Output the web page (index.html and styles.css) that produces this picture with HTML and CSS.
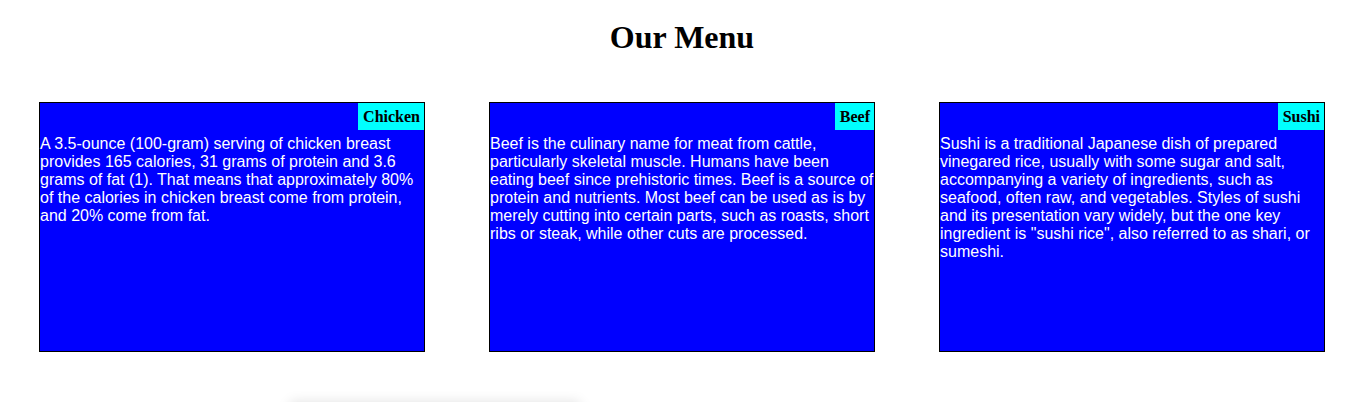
FILE: index.html
```html
<!DOCTYPE html>
<html>
<head>
<meta charset="utf-8">
<link rel="stylesheet" href="styles.css">
</head>
<body>
<h1 class="title">Our Menu</h1>
<div class="menu">
  <div class="card">
    <div class="card-head"><span class="label">Chicken</span></div>
    <p class="desc">A 3.5-ounce (100-gram) serving of chicken breast provides 165 calories, 31 grams of protein and 3.6 grams of fat (1). That means that approximately 80% of the calories in chicken breast come from protein, and 20% come from fat.</p>
  </div>
  <div class="card">
    <div class="card-head"><span class="label">Beef</span></div>
    <p class="desc">Beef is the culinary name for meat from cattle, particularly skeletal muscle. Humans have been eating beef since prehistoric times. Beef is a source of protein and nutrients. Most beef can be used as is by merely cutting into certain parts, such as roasts, short ribs or steak, while other cuts are processed.</p>
  </div>
  <div class="card">
    <div class="card-head"><span class="label">Sushi</span></div>
    <p class="desc">Sushi is a traditional Japanese dish of prepared vinegared rice, usually with some sugar and salt, accompanying a variety of ingredients, such as seafood, often raw, and vegetables. Styles of sushi and its presentation vary widely, but the one key ingredient is "sushi rice", also referred to as shari, or sumeshi.</p>
  </div>
</div>
<div class="below"></div>
</body>
</html>
```

FILE: styles.css
```css
html, body {
  background: #ffffff;
}
body {
  margin: 8px;
  font-family: "Liberation Serif", "Times New Roman", serif;
}
.title {
  font-size: 32px;
  font-weight: bold;
  text-align: center;
  margin: 11px 0 46px;
  line-height: 37px;
}
.menu {
  display: flex;
  justify-content: space-between;
  padding: 0 31px;
}
.card {
  width: 384px;
  height: 248px;
  background: #0000ff;
  border: 1px solid #000;
}
.card-head {
  display: flex;
  justify-content: flex-end;
}
.label {
  background: #00ffff;
  color: #000;
  font-family: "Liberation Serif", "Times New Roman", serif;
  font-weight: bold;
  font-size: 16px;
  line-height: 17px;
  padding: 5px 4px 5px 5px;
}
.desc {
  margin: 0;
  padding-top: 5px;
  color: #ffffff;
  font-family: "Liberation Sans", Arial, sans-serif;
  font-size: 16px;
  line-height: 18px;
}
.below {
  margin: 50px 0 0 282px;
  width: 290px;
  height: 40px;
  box-shadow: 0 0 12px rgba(0, 0, 0, 0.12);
}
```
